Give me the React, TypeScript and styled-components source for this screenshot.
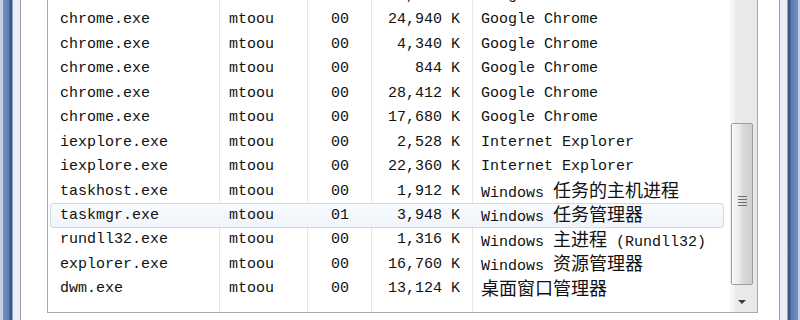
import React from "react";
import styled, { createGlobalStyle, css } from "styled-components";

const Global = createGlobalStyle`
  html, body { margin: 0; padding: 0; background: #ffffff; }
  body { width: 800px; height: 320px; overflow: hidden; }
`;

type Proc = { name: string; user: string; cpu: string; mem: string; desc: string; cjk?: string; tail?: string; selected?: boolean };

const procs: Proc[] = [
  { name: "chrome.exe", user: "mtoou", cpu: "00", mem: "32,092 K", desc: "Google Chrome" },
  { name: "chrome.exe", user: "mtoou", cpu: "00", mem: "24,940 K", desc: "Google Chrome" },
  { name: "chrome.exe", user: "mtoou", cpu: "00", mem: "4,340 K", desc: "Google Chrome" },
  { name: "chrome.exe", user: "mtoou", cpu: "00", mem: "844 K", desc: "Google Chrome" },
  { name: "chrome.exe", user: "mtoou", cpu: "00", mem: "28,412 K", desc: "Google Chrome" },
  { name: "chrome.exe", user: "mtoou", cpu: "00", mem: "17,680 K", desc: "Google Chrome" },
  { name: "iexplore.exe", user: "mtoou", cpu: "00", mem: "2,528 K", desc: "Internet Explorer" },
  { name: "iexplore.exe", user: "mtoou", cpu: "00", mem: "22,360 K", desc: "Internet Explorer" },
  { name: "taskhost.exe", user: "mtoou", cpu: "00", mem: "1,912 K", desc: "Windows ", cjk: "任务的主机进程" },
  { name: "taskmgr.exe", user: "mtoou", cpu: "01", mem: "3,948 K", desc: "Windows ", cjk: "任务管理器", selected: true },
  { name: "rundll32.exe", user: "mtoou", cpu: "00", mem: "1,316 K", desc: "Windows ", cjk: "主进程", tail: " (Rundll32)" },
  { name: "explorer.exe", user: "mtoou", cpu: "00", mem: "16,760 K", desc: "Windows ", cjk: "资源管理器" },
  { name: "dwm.exe", user: "mtoou", cpu: "00", mem: "13,124 K", desc: "", cjk: "桌面窗口管理器" },
];

const Window = styled.div`
  display: flex;
  height: 320px;
  width: 800px;
`;

const FrameEdge = styled.div<{ $side: "left" | "right" }>`
  width: 13px;
  flex: none;
  background: ${(p) =>
    p.$side === "left"
      ? "linear-gradient(to right, #c4d0e6 0, #c4d0e6 3px, #7590c4 3px, #5c79b2 9px, #3f5687 10px, #3f5687 12px, #8fa2c8 12px)"
      : "linear-gradient(to left, #c4d0e6 0, #c4d0e6 2px, #7590c4 2px, #5c79b2 9px, #3f5687 10px, #3f5687 12px, #8fa2c8 12px)"};
`;

const Gutter = styled.div`
  width: 7px;
  flex: none;
  background: #eaedf5;
`;

const Client = styled.div`
  flex: 1;
  background: #ffffff;
  border-left: 1px solid #9c9c9c;
  border-right: 1px solid #9c9c9c;
  padding: 0 21px 7px 26px;
  display: flex;
  flex-direction: column;
`;

const ListView = styled.div`
  flex: 1;
  display: flex;
  border: 1px solid #a9a9a9;
  border-top: none;
  overflow: hidden;
`;

const Rows = styled.div`
  flex: 1;
  overflow: hidden;
  background:
    linear-gradient(#e6e6e6, #e6e6e6) 171px 0 / 1px 100% no-repeat,
    linear-gradient(#e6e6e6, #e6e6e6) 259px 0 / 1px 100% no-repeat,
    linear-gradient(#e6e6e6, #e6e6e6) 323px 0 / 1px 100% no-repeat,
    linear-gradient(#e6e6e6, #e6e6e6) 424px 0 / 1px 100% no-repeat,
    #ffffff;
`;

const RowList = styled.div`
  margin-top: -16.7px;
`;

const Row = styled.div<{ $selected?: boolean }>`
  position: relative;
  display: grid;
  grid-template-columns: 171px 88px 64px 101px 1fr;
  height: 24.45px;
  align-items: center;
  font-family: "Liberation Mono", "Noto Sans CJK SC", monospace;
  font-size: 15px;
  color: #111111;
  white-space: nowrap;
  ${(p) =>
    p.$selected &&
    css`
      &::before {
        content: "";
        position: absolute;
        top: 0;
        bottom: 0;
        left: 2px;
        right: 6px;
        border: 1px solid #cfdbe8;
        border-radius: 3px;
        background: linear-gradient(#f8fbfe, #f0f5fb);
      }
    `}
`;

const Cell = styled.div<{ $align?: "left" | "right"; $pl?: number; $pr?: number }>`
  position: relative;
  text-align: ${(p) => p.$align ?? "left"};
  padding-left: ${(p) => p.$pl ?? 0}px;
  padding-right: ${(p) => p.$pr ?? 0}px;
`;

const Cjk = styled.span`
  font-family: "Noto Sans CJK SC", sans-serif;
  font-size: 18px;
  line-height: 1;
`;

const ScrollBar = styled.div`
  width: 26px;
  flex: none;
  display: flex;
  flex-direction: column;
  background: linear-gradient(to right, #f6f6f6 0, #f6f6f6 3px, #ebebeb 3px, #e8e8e8 100%);
  border-left: 1px solid #f2f2f2;
`;

const Thumb = styled.div`
  margin: 123px 4px 0 0;
  height: 160px;
  border: 1px solid #9b9b9b;
  border-radius: 2px;
  background: linear-gradient(to right, #f7f7f7 0%, #ececec 35%, #d9d9d9 55%, #cfcfcf 100%);
  box-shadow: inset 1px 0 0 #ffffff;
  display: flex;
  align-items: center;
  justify-content: center;
`;

const Grip = styled.div`
  width: 9px;
  height: 11px;
  background: repeating-linear-gradient(#6e6e6e 0, #6e6e6e 1px, transparent 1px, transparent 3px);
  margin-top: -6px;
`;

const Spacer = styled.div`
  flex: 1;
`;

const DownButton = styled.div`
  height: 22px;
  display: flex;
  align-items: center;
  justify-content: center;
  padding-right: 4px;
`;

const Arrow = styled.div`
  width: 0;
  height: 0;
  border-left: 4px solid transparent;
  border-right: 4px solid transparent;
  border-top: 4px solid #3c3c3c;
  margin-top: 2px;
`;

export default function App() {
  return (
    <>
      <Global />
      <Window>
        <FrameEdge $side="left" />
        <Gutter />
        <Client>
          <ListView>
            <Rows>
              <RowList>
                {procs.map((p, i) => (
                  <Row key={i} $selected={p.selected}>
                    <Cell $pl={12}>{p.name}</Cell>
                    <Cell $pl={10}>{p.user}</Cell>
                    <Cell $align="right" $pr={22}>{p.cpu}</Cell>
                    <Cell $align="right" $pr={12}>{p.mem}</Cell>
                    <Cell $pl={9}>
                      {p.desc}
                      {p.cjk && <Cjk>{p.cjk}</Cjk>}
                      {p.tail}
                    </Cell>
                  </Row>
                ))}
              </RowList>
            </Rows>
            <ScrollBar>
              <Thumb>
                <Grip />
              </Thumb>
              <Spacer />
              <DownButton>
                <Arrow />
              </DownButton>
            </ScrollBar>
          </ListView>
        </Client>
        <Gutter />
        <FrameEdge $side="right" />
      </Window>
    </>
  );
}
